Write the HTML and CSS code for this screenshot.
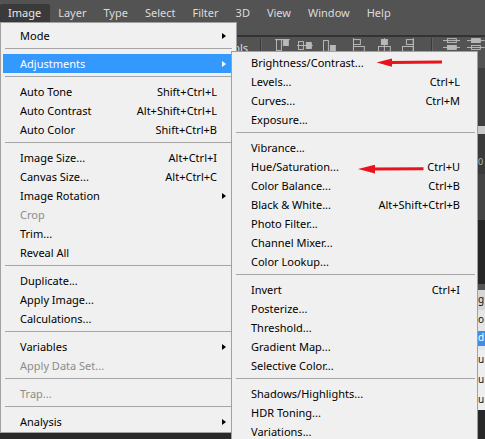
FILE: index.html
```html
<!DOCTYPE html>
<html>
<head>
<meta charset="utf-8">
<link rel="stylesheet" href="styles.css">
</head>
<body>
<div class="app">
  <div class="menubar">
    <span class="mb-item active">Image</span>
    <span class="mb-item">Layer</span>
    <span class="mb-item">Type</span>
    <span class="mb-item">Select</span>
    <span class="mb-item">Filter</span>
    <span class="mb-item">3D</span>
    <span class="mb-item">View</span>
    <span class="mb-item">Window</span>
    <span class="mb-item">Help</span>
  </div>
  <div class="optbar">
    <span class="opt-label">Show Transform Controls</span>
    <span class="opt-sep s1"></span>
    <svg class="ico i1" viewBox="0 0 16 15"><path d="M0 1.5h15" /><rect x="1.5" y="1.5" width="5" height="11" class="o"/><rect x="8.5" y="1.5" width="5" height="6" class="f"/></svg>
    <svg class="ico i2" viewBox="0 0 16 15"><path d="M0 7.5h16" /><rect x="1.5" y="3.5" width="5" height="8" class="o"/><rect x="9.5" y="4.5" width="5" height="6" class="f"/></svg>
    <svg class="ico i3" viewBox="0 0 16 15"><path d="M0 13.5h15" /><rect x="1.5" y="2.5" width="5" height="11" class="o"/><rect x="8.5" y="7.5" width="5" height="6" class="f"/></svg>
    <svg class="ico i4" viewBox="0 0 16 15"><path d="M1.5 0v15" /><rect x="1.5" y="1.5" width="7" height="5" class="o"/><rect x="1.5" y="8.5" width="11" height="5" class="o"/></svg>
    <svg class="ico i5" viewBox="0 0 16 15"><path d="M7.5 0v15" /><rect x="4.5" y="1.5" width="6" height="5" class="f"/><rect x="1.5" y="8.5" width="12" height="5" class="o"/></svg>
    <svg class="ico i6" viewBox="0 0 16 15"><path d="M12.5 0v15" /><rect x="5.5" y="1.5" width="7" height="5" class="o"/><rect x="1.5" y="8.5" width="11" height="5" class="o"/></svg>
    <span class="opt-sep s2"></span>
    <svg class="ico i7" viewBox="0 0 18 15"><path d="M0 2.5h18M0 9.5h18" /><rect x="4.5" y="0.5" width="9" height="4" class="o"/><rect x="4.5" y="7.5" width="9" height="4" class="f"/></svg>
    <svg class="ico i8" viewBox="0 0 18 15"><path d="M0 2.5h18M0 9.5h18" /><rect x="4.5" y="0.5" width="9" height="4" class="f"/><rect x="4.5" y="7.5" width="9" height="4" class="o"/></svg>
  </div>
  <div class="workspace">
    <div class="canvas"></div>
    <div class="rpanel">
      <div class="rp-a"></div>
      <div class="rp-b"></div>
      <div class="rp-c"><span>0</span></div>
      <div class="rp-d"></div>
      <div class="rp-e"></div>
      <div class="rp-f">g</div>
      <div class="rp-g">o</div>
      <div class="rp-h">d</div>
      <div class="rp-i">u</div>
      <div class="rp-i">u</div>
      <div class="rp-i">u</div>
    </div>
  </div>
</div>

<div class="menu main">
  <div class="item"><span class="lbl">Mode</span><span class="arr"></span></div>
  <div class="sep"></div>
  <div class="item hl"><span class="lbl">Adjustments</span><span class="arr"></span></div>
  <div class="sep"></div>
  <div class="item"><span class="lbl">Auto Tone</span><span class="sc">Shift+Ctrl+L</span></div>
  <div class="item"><span class="lbl">Auto Contrast</span><span class="sc">Alt+Shift+Ctrl+L</span></div>
  <div class="item"><span class="lbl">Auto Color</span><span class="sc">Shift+Ctrl+B</span></div>
  <div class="sep"></div>
  <div class="item"><span class="lbl">Image Size...</span><span class="sc">Alt+Ctrl+I</span></div>
  <div class="item"><span class="lbl">Canvas Size...</span><span class="sc">Alt+Ctrl+C</span></div>
  <div class="item"><span class="lbl">Image Rotation</span><span class="arr"></span></div>
  <div class="item dis"><span class="lbl">Crop</span></div>
  <div class="item"><span class="lbl">Trim...</span></div>
  <div class="item"><span class="lbl">Reveal All</span></div>
  <div class="sep"></div>
  <div class="item"><span class="lbl">Duplicate...</span></div>
  <div class="item"><span class="lbl">Apply Image...</span></div>
  <div class="item"><span class="lbl">Calculations...</span></div>
  <div class="sep"></div>
  <div class="item"><span class="lbl">Variables</span><span class="arr"></span></div>
  <div class="item dis"><span class="lbl">Apply Data Set...</span></div>
  <div class="sep"></div>
  <div class="item dis"><span class="lbl">Trap...</span></div>
  <div class="sep"></div>
  <div class="item"><span class="lbl">Analysis</span><span class="arr"></span></div>
</div>

<div class="menu sub">
  <div class="item"><span class="lbl">Brightness/Contrast...</span></div>
  <div class="item"><span class="lbl">Levels...</span><span class="sc">Ctrl+L</span></div>
  <div class="item"><span class="lbl">Curves...</span><span class="sc">Ctrl+M</span></div>
  <div class="item"><span class="lbl">Exposure...</span></div>
  <div class="sep"></div>
  <div class="item"><span class="lbl">Vibrance...</span></div>
  <div class="item"><span class="lbl">Hue/Saturation...</span><span class="sc">Ctrl+U</span></div>
  <div class="item"><span class="lbl">Color Balance...</span><span class="sc">Ctrl+B</span></div>
  <div class="item"><span class="lbl">Black &amp; White...</span><span class="sc">Alt+Shift+Ctrl+B</span></div>
  <div class="item"><span class="lbl">Photo Filter...</span></div>
  <div class="item"><span class="lbl">Channel Mixer...</span></div>
  <div class="item"><span class="lbl">Color Lookup...</span></div>
  <div class="sep"></div>
  <div class="item"><span class="lbl">Invert</span><span class="sc">Ctrl+I</span></div>
  <div class="item"><span class="lbl">Posterize...</span></div>
  <div class="item"><span class="lbl">Threshold...</span></div>
  <div class="item"><span class="lbl">Gradient Map...</span></div>
  <div class="item"><span class="lbl">Selective Color...</span></div>
  <div class="sep"></div>
  <div class="item"><span class="lbl">Shadows/Highlights...</span></div>
  <div class="item"><span class="lbl">HDR Toning...</span></div>
  <div class="item"><span class="lbl">Variations...</span></div>
</div>

<svg class="anno" viewBox="0 0 485 439" width="485" height="439">
  <path class="red" d="M390 61 L442 60.5 L442 63.5 L390 64 Z"/>
  <path class="red" d="M376.5 62.5 L392 58.5 L392 66.8 Z"/>
  <path class="red" d="M373 167.5 L423.5 167.2 L423.5 170.3 L373 170.5 Z"/>
  <path class="red" d="M358 169 L375 164.8 L375 173.5 Z"/>
</svg>
</body>
</html>
```

FILE: styles.css
```css
html, body {
  margin: 0;
  padding: 0;
}
body {
  width: 485px;
  height: 439px;
  overflow: hidden;
  position: relative;
  background: #282828;
  font-family: "Noto Sans", "Open Sans", sans-serif;
  font-size: 11px;
}
.app {
  display: flex;
  flex-direction: column;
  height: 439px;
}
.menubar {
  height: 35px;
  background: #535353;
  display: flex;
  align-items: flex-start;
  padding-top: 4px;
  box-sizing: border-box;
}
.mb-item {
  height: 18px;
  line-height: 18px;
  padding: 0 8.5px;
  color: #dcdcdc;
}
.mb-item:first-child {
  padding-left: 8px;
}
.mb-item.active {
  background: #3a3a3a;
  border-radius: 2px 2px 0 0;
  color: #e8e8e8;
}
.optbar {
  height: 30px;
  background: #535353;
  border-top: 2px solid #333333;
  display: flex;
  align-items: flex-start;
  padding-top: 1px;
}
.opt-label {
  width: 252px;
  text-align: right;
  color: #dedede;
  white-space: nowrap;
  overflow: hidden;
  line-height: 18px;
  margin-top: 1px;
}
.opt-sep {
  width: 1px;
  height: 24px;
  background: #3a3a3a;
  border-right: 1px solid #636363;
}
.opt-sep.s1 { margin-left: 12px; }
.opt-sep.s2 { margin-left: 14px; }
.ico {
  width: 16px;
  height: 15px;
  margin-top: 0;
  fill: none;
  stroke: #b9b9b9;
  stroke-width: 1;
}
.ico .f { fill: #b9b9b9; }
.ico.i1 { margin-left: 13px; }
.ico.i2 { margin-left: 6px; }
.ico.i3 { margin-left: 9px; }
.ico.i4 { margin-left: 15px; }
.ico.i5 { margin-left: 9px; }
.ico.i6 { margin-left: 8px; }
.ico.i7 { width: 18px; margin-left: 10px; }
.ico.i8 { width: 18px; margin-left: 7px; }
.workspace {
  flex: 1;
  display: flex;
}
.canvas {
  flex: 1;
  background: #282828;
}
.rpanel {
  width: 7px;
  display: flex;
  flex-direction: column;
  font-size: 10px;
  line-height: 19px;
  overflow: hidden;
  white-space: nowrap;
}
.rp-a { height: 58px; background: #3f3f3f; }
.rp-b { height: 8px; background: #c9c9c9; }
.rp-c { height: 40px; background: #3a3a3a; color: #bdbdbd; line-height: 56px; font-size: 9px; }
.rp-d { height: 46px; background: #444444; }
.rp-e { height: 64px; background: #262626; }
.rp-f { height: 20px; background: #d6d6d6; color: #111; border-top: 6px solid #535353; }
.rp-g { height: 18px; background: #e6e6e6; color: #111; }
.rp-h { height: 22px; color: #fff; background: linear-gradient(#e6e6e6 0 3px, #3d8ee8 3px 18px, #e6e6e6 18px); }
.rp-i { height: 20px; background: #eeeeee; color: #111; }

.menu {
  position: absolute;
  box-sizing: border-box;
  background: #f0f0f0;
  border: 1px solid #a0a0a0;
  color: #000;
  white-space: nowrap;
}
.menu.main {
  left: 0;
  top: 22px;
  width: 237px;
  padding: 3.4px 0 1px 0;
}
.menu.sub {
  left: 231px;
  top: 51px;
  width: 247px;
  height: 400px;
  padding: 1px 0 0 0;
}
.item {
  display: grid;
  grid-template-columns: 1fr auto 17px;
  align-items: center;
  height: 19px;
  line-height: 20px;
  margin: 0 2px;
  padding-left: 17px;
}
.sub .item {
  grid-template-columns: 1fr auto 15px;
}
.item .lbl { grid-column: 1; }
.item .sc { grid-column: 2; }
.item .arr {
  grid-column: 3;
  justify-self: start;
  margin-left: 5px;
  width: 0;
  height: 0;
  border-left: 4px solid #000;
  border-top: 3.5px solid transparent;
  border-bottom: 3.5px solid transparent;
}
.item.hl {
  background: #3399ff;
  color: #ffffff;
}
.item.hl .arr {
  border-left-color: #ffffff;
}
.item.dis {
  color: #8c8c8c;
}
.sep {
  box-sizing: border-box;
  height: 9px;
  padding-top: 3px;
  margin: 0 4px 0 4px;
}
.sub .sep {
  margin: 0 2px 0 4px;
}
.sep::before {
  content: "";
  display: block;
  height: 1px;
  background: #a6a6a6;
}
.anno {
  position: absolute;
  left: 0;
  top: 0;
  pointer-events: none;
}
.anno .red {
  fill: #e8131b;
}
```
